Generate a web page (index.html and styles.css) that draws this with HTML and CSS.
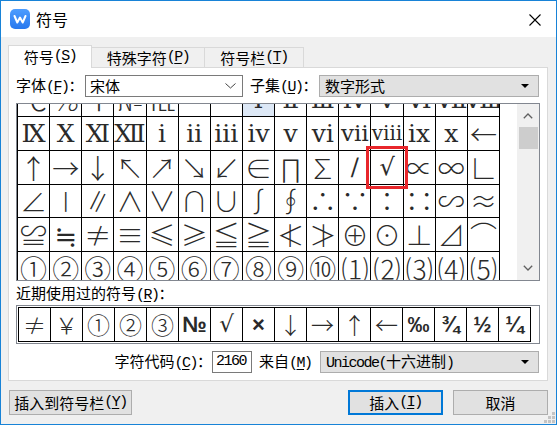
FILE: index.html
```html
<!DOCTYPE html>
<html lang="zh-CN">
<head>
<meta charset="utf-8">
<title>符号</title>
<link rel="stylesheet" href="styles.css">
</head>
<body>
<div class="window">
  <header class="titlebar">
    <svg class="app-icon" width="20" height="20" viewBox="0 0 20 20">
      <defs>
        <linearGradient id="iconFill" x1="0" y1="0" x2="0" y2="1">
          <stop offset="0" stop-color="#4d9dff"/>
          <stop offset="1" stop-color="#2878ee"/>
        </linearGradient>
      </defs>
      <rect width="20" height="20" rx="5" fill="url(#iconFill)"/>
      <polyline points="4.5,7 7.3,13.5 10,8.6 12.7,13.5 15.5,7" fill="none" stroke="#fff" stroke-width="2" stroke-linejoin="round" stroke-linecap="round"/>
    </svg>
    <span class="title">符号</span>
    <span class="close">
      <svg width="12" height="12" viewBox="0 0 12 12"><path d="M0.5 0.5 L11.5 11.5 M11.5 0.5 L0.5 11.5" stroke="#000" stroke-width="1.1" fill="none"/></svg>
    </span>
  </header>

  <main class="client">
    <nav class="tabs">
      <div class="tab active">符号<span class="mk">(<u>S</u>)</span></div>
      <div class="tab">特殊字符<span class="mk">(<u>P</u>)</span></div>
      <div class="tab">符号栏<span class="mk">(<u>T</u>)</span></div>
    </nav>

    <section class="pane">
      <div class="row font-row">
        <span class="lbl w-font">字体<span class="mk">(<u>F</u>)</span>：</span>
        <div class="combo edit">
          <span>宋体</span>
          <svg class="chev" width="11" height="6" viewBox="0 0 11 6"><polyline points="0.5,0.5 5.5,5 10.5,0.5" fill="none" stroke="#444" stroke-width="1"/></svg>
        </div>
        <span class="lbl w-subset">子集<span class="mk">(<u>U</u>)</span>：</span>
        <div class="combo list">
          <span>数字形式</span>
          <i class="tri"></i>
        </div>
      </div>

      <div class="charmap">
        <div class="viewport">
          <div class="grid">
            <div class="c">℃</div><div class="c">℅</div><div class="c">℉</div><div class="c">№</div><div class="c">℡</div><div class="c">™</div><div class="c">℠</div><div class="c hl rn">Ⅰ</div><div class="c rn">Ⅱ</div><div class="c rn">Ⅲ</div><div class="c rn">Ⅳ</div><div class="c rn">Ⅴ</div><div class="c rn">Ⅵ</div><div class="c rn">Ⅶ</div><div class="c rn">Ⅷ</div>
            <div class="c rn">Ⅸ</div><div class="c rn">Ⅹ</div><div class="c rn">Ⅺ</div><div class="c rn">Ⅻ</div><div class="c rn">ⅰ</div><div class="c rn">ⅱ</div><div class="c rn">ⅲ</div><div class="c rn">ⅳ</div><div class="c rn">ⅴ</div><div class="c rn">ⅵ</div><div class="c rn sm">ⅶ</div><div class="c rn xs">ⅷ</div><div class="c rn">ⅸ</div><div class="c rn">ⅹ</div><div class="c">←</div>
            <div class="c">↑</div><div class="c">→</div><div class="c">↓</div><div class="c">↖</div><div class="c">↗</div><div class="c">↘</div><div class="c">↙</div><div class="c">∈</div><div class="c">∏</div><div class="c">∑</div><div class="c thin">∕</div><div class="c thin sel">√</div><div class="c">∝</div><div class="c">∞</div><div class="c">∟</div>
            <div class="c">∠</div><div class="c">∣</div><div class="c">∥</div><div class="c">∧</div><div class="c">∨</div><div class="c">∩</div><div class="c">∪</div><div class="c">∫</div><div class="c">∮</div><div class="c">∴</div><div class="c">∵</div><div class="c">∶</div><div class="c">∷</div><div class="c">∽</div><div class="c">≈</div>
            <div class="c">≌</div><div class="c">≒</div><div class="c">≠</div><div class="c">≡</div><div class="c">≤</div><div class="c">≥</div><div class="c">≦</div><div class="c">≧</div><div class="c">≮</div><div class="c">≯</div><div class="c">⊕</div><div class="c">⊙</div><div class="c">⊥</div><div class="c">⊿</div><div class="c">⌒</div>
            <div class="c">①</div><div class="c">②</div><div class="c">③</div><div class="c">④</div><div class="c">⑤</div><div class="c">⑥</div><div class="c">⑦</div><div class="c">⑧</div><div class="c">⑨</div><div class="c">⑩</div><div class="c">⑴</div><div class="c">⑵</div><div class="c">⑶</div><div class="c">⑷</div><div class="c">⑸</div>
          </div>
        </div>
        <div class="vscroll">
          <svg class="arrow" width="10" height="6" viewBox="0 0 10 6"><polyline points="0.8,5.2 5,1 9.2,5.2" fill="none" stroke="#606060" stroke-width="1.3"/></svg>
          <div class="thumb"></div>
          <div class="track"></div>
          <svg class="arrow" width="10" height="6" viewBox="0 0 10 6"><polyline points="0.8,0.8 5,5 9.2,0.8" fill="none" stroke="#606060" stroke-width="1.3"/></svg>
        </div>
      </div>

      <div class="recent-label">近期使用过的符号<span class="mk">(<u>R</u>)</span>：</div>
      <div class="recent">
        <div class="rgrid">
          <div class="r">≠</div><div class="r">￥</div><div class="r">①</div><div class="r">②</div><div class="r">③</div><div class="r b">№</div><div class="r thin">√</div><div class="r b">×</div><div class="r">↓</div><div class="r">→</div><div class="r">↑</div><div class="r">←</div><div class="r b">‰</div><div class="r b">¾</div><div class="r b">½</div><div class="r b">¼</div>
        </div>
      </div>

      <div class="row code-row">
        <span class="lbl">字符代码<span class="mk">(<u>C</u>)</span>：</span>
        <div class="field"><span class="mono">2160</span></div>
        <span class="lbl w-from">来自<span class="mk">(<u>M</u>)</span></span>
        <div class="combo list wide">
          <span><span class="mono">Unicode(</span>十六进制<span class="mono">)</span></span>
          <i class="tri"></i>
        </div>
      </div>
    </section>

    <footer class="buttons">
      <div class="btn btn-bar">插入到符号栏<span class="mk">(<u>Y</u>)</span></div>
      <div class="spacer"></div>
      <div class="btn btn-default">插入<span class="mk">(<u>I</u>)</span></div>
      <div class="btn">取消</div>
    </footer>

    <div class="grip">
      <svg width="11" height="11" viewBox="0 0 11 11" fill="#c4c4c4">
        <rect x="8" y="0" width="3" height="3"/>
        <rect x="4" y="4" width="3" height="3"/><rect x="8" y="4" width="3" height="3"/>
        <rect x="0" y="8" width="3" height="3"/><rect x="4" y="8" width="3" height="3"/><rect x="8" y="8" width="3" height="3"/>
      </svg>
    </div>
  </main>
</div>
</body>
</html>
```

FILE: styles.css
```css
* { box-sizing: border-box; }

html, body {
  margin: 0;
  padding: 0;
}

body {
  width: 557px;
  height: 425px;
  overflow: hidden;
  background: #fff;
  font-family: "Noto Sans CJK SC", sans-serif;
  font-size: 15px;
  color: #000;
}

u { text-decoration-thickness: 1px; text-underline-offset: 2px; }

/* half-width latin parts, SimSun-like pitch */
.mk, .mono {
  font-family: "Liberation Mono", "Noto Sans CJK SC", monospace;
  letter-spacing: -1.5px;
}

.window {
  width: 557px;
  height: 425px;
  border: 1px solid #1883d7;
  background: #f0f0f0;
  display: flex;
  flex-direction: column;
}

/* ---------- title bar ---------- */
.titlebar {
  height: 36px;
  flex: none;
  background: #fff;
  display: flex;
  align-items: center;
  padding-left: 9px;
}

.app-icon { display: block; flex: none; }

.title {
  margin-left: 6px;
  font-size: 16px;
  line-height: 20px;
}

.close {
  margin-left: auto;
  width: 42px;
  height: 36px;
  display: flex;
  align-items: center;
  justify-content: center;
  padding-top: 2px;
}
.close svg { display: block; }

/* ---------- client area ---------- */
.client {
  flex: 1;
  position: relative;
  padding: 8px 8px 0 7px;
  display: flex;
  flex-direction: column;
}

.tabs {
  display: flex;
  align-items: flex-end;
  height: 22px;
  position: relative;
  z-index: 1;
}

.tab {
  height: 20px;
  border: 1px solid #d9d9d9;
  border-left: none;
  border-bottom: none;
  background: #f0f0f0;
  display: flex;
  align-items: center;
  justify-content: center;
  line-height: 18px;
}
.tab:nth-child(2) { width: 113px; }
.tab:nth-child(3) { width: 99px; }

.tab.active {
  width: 84px;
  height: 23px;
  margin-bottom: -1px;
  border-left: 1px solid #d9d9d9;
  background: #fff;
  padding-bottom: 1px;
}

.pane {
  width: 540px;
  height: 314px;
  border: 1px solid #d9d9d9;
  background: #fff;
  padding: 7px 8px 0 7px;
  display: flex;
  flex-direction: column;
}

.row {
  display: flex;
  align-items: center;
  height: 22px;
  flex: none;
}

.lbl {
  white-space: nowrap;
  line-height: 20px;
}
.w-font { width: 69px; }
.w-subset { width: 69px; margin-left: 7px; }
.w-from { width: 61px; margin-left: 7px; }

.combo {
  height: 22px;
  display: flex;
  align-items: center;
  padding-left: 5px;
  line-height: 20px;
}
.combo.edit {
  width: 158px;
  border: 1px solid #7a7a7a;
  background: #fff;
  padding-left: 4px;
}
.combo.list {
  width: 220px;
  border: 1px solid #adadad;
  background: #e1e1e1;
}
.combo.wide { width: 219px; }

.chev { margin-left: auto; margin-right: 6px; display: block; }

.tri {
  margin-left: auto;
  margin-right: 9px;
  width: 0;
  height: 0;
  border-left: 4px solid transparent;
  border-right: 4px solid transparent;
  border-top: 4px solid #000;
}

/* ---------- character map ---------- */
.charmap {
  margin-top: 6px;
  width: 524px;
  height: 178px;
  border: 1px solid #828790;
  background: #fff;
  display: flex;
  flex: none;
}

.viewport {
  width: 500px;
  height: 100%;
  overflow: hidden;
}

.grid {
  width: 483px;
  margin-top: -21.75px;
  display: grid;
  grid-template-columns: repeat(15, 1fr);
  grid-auto-rows: 32.75px;
  gap: 1px;
  padding: 1px;
  background: #000;
}

.c {
  background: #fff;
  display: flex;
  align-items: center;
  justify-content: center;
  font-family: "Noto Sans CJK SC", "DejaVu Serif", serif;
  font-weight: 300;
  font-size: 27px;
  line-height: 1;
  color: #2a2a2a;
  overflow: hidden;
}
.c.rn {
  font-family: "DejaVu Serif", "Noto Sans CJK SC", serif;
  font-weight: normal;
  font-size: 25px;
}
.c.rn.sm { font-size: 23px; }
.c.rn.xs { font-size: 20px; }
.c.thin {
  font-family: "DejaVu Serif", serif;
  font-weight: normal;
  font-size: 24px;
}
.c.hl { background: #dde8f6; }
.c.sel {
  position: relative;
  z-index: 1;
  overflow: visible;
  outline: 3px solid #e8262b;
  outline-offset: 2px;
}

.vscroll {
  width: 22px;
  background: #f0f0f0;
  display: flex;
  flex-direction: column;
  align-items: center;
}
.vscroll .arrow { display: block; flex: none; }
.vscroll .arrow:first-child { margin-top: 9px; }
.vscroll .arrow:last-child { margin-bottom: 9px; }
.thumb {
  width: 19px;
  height: 22px;
  margin-top: 8px;
  background: #cdcdcd;
  flex: none;
}
.track { flex: 1; }

/* ---------- recent symbols ---------- */
.recent-label {
  height: 24px;
  line-height: 24px;
  white-space: nowrap;
  flex: none;
}

.recent {
  width: 524px;
  height: 39px;
  border: 1px solid #828790;
  padding: 1px;
  background: #fff;
  flex: none;
}

.rgrid {
  width: 513px;
  height: 35px;
  display: grid;
  grid-template-columns: repeat(16, 1fr);
  gap: 1px;
  padding: 1px;
  background: #000;
}

.r {
  background: #fff;
  display: flex;
  align-items: center;
  justify-content: center;
  font-family: "Noto Sans CJK SC", "DejaVu Sans", sans-serif;
  font-weight: 300;
  font-size: 23px;
  line-height: 1;
  color: #2a2a2a;
}
.r.thin {
  font-family: "DejaVu Serif", serif;
  font-weight: normal;
  font-size: 23px;
}
.r.b {
  font-family: "Liberation Sans", "DejaVu Sans", sans-serif;
  font-weight: bold;
  font-size: 22px;
}

/* ---------- code row ---------- */
.code-row {
  margin-top: 7px;
  justify-content: flex-end;
}

.field {
  width: 40px;
  height: 22px;
  border: 1px solid #7a7a7a;
  background: #fff;
  padding-left: 3px;
  display: flex;
  align-items: center;
  line-height: 20px;
}

/* ---------- buttons ---------- */
.buttons {
  margin-top: 9px;
  height: 25px;
  display: flex;
  flex: none;
}

.btn {
  width: 95px;
  height: 25px;
  border: 1px solid #adadad;
  background: #e1e1e1;
  display: flex;
  align-items: center;
  justify-content: center;
  line-height: 20px;
  white-space: nowrap;
}
.btn + .btn { margin-left: 10px; }
.btn-bar { width: 123px; margin-left: 1px; }
.btn-default {
  border-color: #0078d7;
  box-shadow: inset 0 0 0 1px #0078d7;
}
.spacer { flex: 1; }

.grip {
  position: absolute;
  right: 1px;
  bottom: 1px;
  line-height: 0;
}
```
